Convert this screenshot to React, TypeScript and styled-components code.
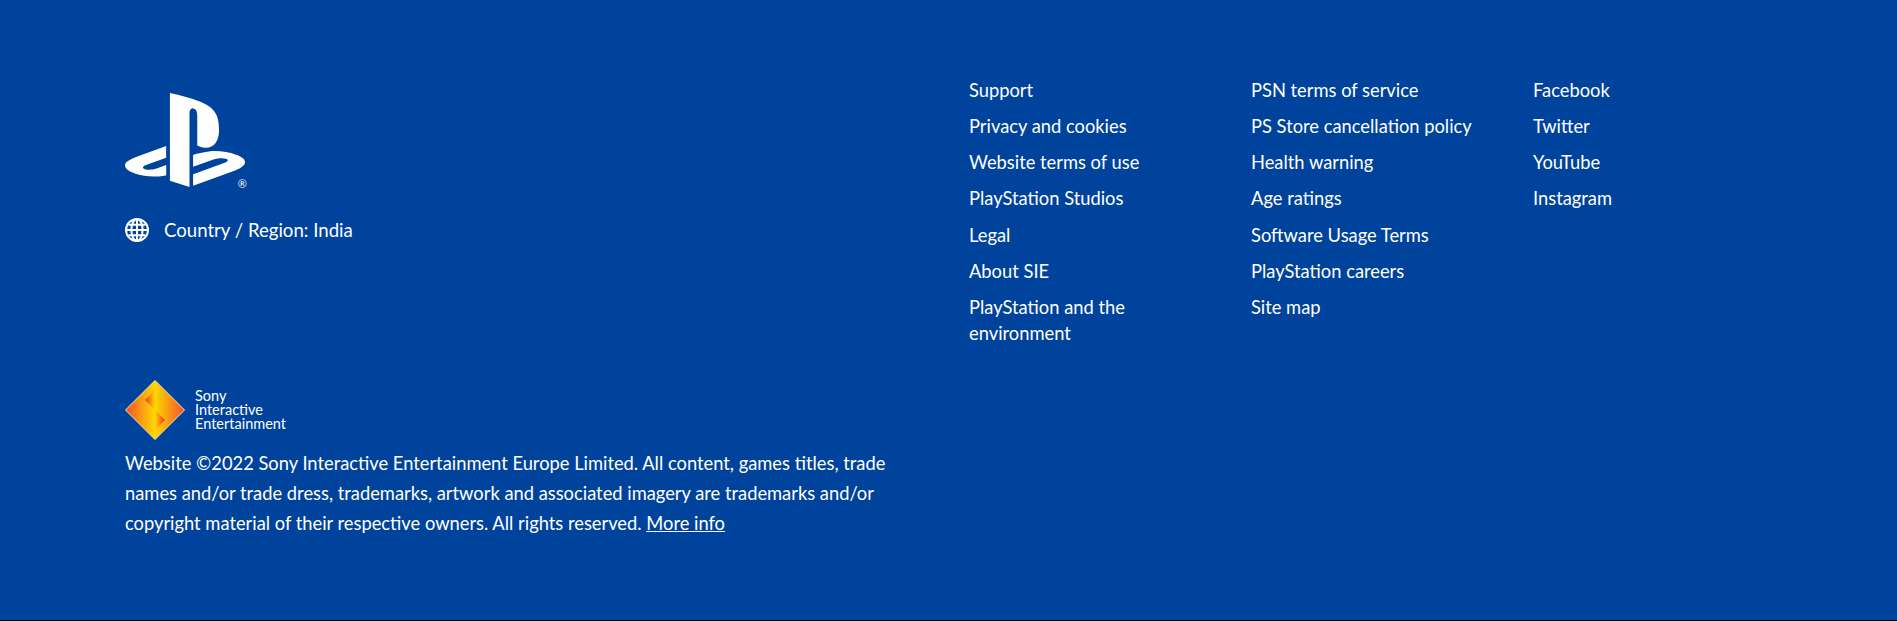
import styled, { createGlobalStyle } from "styled-components";

const GlobalStyle = createGlobalStyle`
  html, body {
    margin: 0;
    padding: 0;
    background: #000;
  }
`;

const Footer = styled.footer`
  box-sizing: border-box;
  height: 620px;
  background: #00439c;
  color: #fff;
  font-family: Lato, "Liberation Sans", sans-serif;
  font-size: 18.32px;
  display: flex;
  padding: 77px 125px 0;
`;

const Left = styled.div`
  width: 844px;
  flex: none;
  display: flex;
  flex-direction: column;
`;

const LogoWrap = styled.div`
  position: relative;
  width: 120px;
  height: 94px;
  margin-top: 16px;
`;

const Registered = styled.span`
  position: absolute;
  right: -2px;
  bottom: -2px;
  font-size: 11px;
  line-height: 10px;
`;

const Region = styled.div`
  display: flex;
  align-items: center;
  gap: 15px;
  margin-top: 30px;
  line-height: 26px;
  font-size: 18.6px;
`;

const SieRow = styled.div`
  display: flex;
  align-items: center;
  gap: 10px;
  margin-top: 136.5px;
`;

const SieName = styled.div`
  font-size: 14.5px;
  line-height: 14px;
`;

const Legal = styled.p`
  margin: 8px 0 0;
  width: 800px;
  line-height: 30.2px;
`;

const MoreInfo = styled.a`
  color: #fff;
  text-decoration: underline;
`;

const Columns = styled.nav`
  display: grid;
  grid-template-columns: repeat(3, 282px);
  align-items: start;
`;

const LinkList = styled.ul`
  list-style: none;
  margin: 0;
  padding: 0;
`;

const LinkItem = styled.li`
  width: 200px;
  line-height: 26px;
  margin-bottom: 10.15px;
`;

const Wide = styled(LinkItem)`
  width: 260px;
`;

const PsLogo = () => (
  <svg width="120" height="94" viewBox="0 2.6 24 18.8" fill="#fff">
    <path d="M8.984 2.596v17.547l3.915 1.261V6.688c0-.69.304-1.151.794-.991.636.18.76.814.76 1.505v5.875c2.441 1.193 4.362-.002 4.362-3.152 0-3.237-1.126-4.675-4.438-5.827-1.307-.448-3.728-1.186-5.39-1.502zm4.656 16.241l6.296-2.275c.715-.258.826-.625.246-.818-.586-.192-1.637-.139-2.357.123l-4.205 1.5V14.98l.24-.085s1.201-.42 2.913-.615c1.696-.18 3.785.03 5.437.661 1.848.601 2.04 1.472 1.576 2.072-.465.6-1.622 1.036-1.622 1.036l-8.544 3.107V18.86zM1.807 18.6c-1.9-.545-2.214-1.668-1.352-2.32.801-.586 2.16-1.052 2.16-1.052l5.615-2.013v2.313L4.205 17c-.705.271-.825.632-.239.826.586.195 1.637.15 2.343-.12L8.247 17v2.074c-.12.03-.256.044-.39.073-1.939.331-3.996.196-6.038-.479z" />
  </svg>
);

const Globe = () => (
  <svg width="24" height="24" viewBox="0 0 24 24">
    <g fill="none" stroke="#fff" strokeWidth="2">
      <circle cx="12" cy="12" r="11" />
      <ellipse cx="12" cy="12" rx="5.6" ry="11" />
      <path d="M12 1v22M3.5 6.8h17M1 12h22M3.5 17.2h17" />
    </g>
  </svg>
);

const SieLogo = () => (
  <svg width="60" height="60" viewBox="0 0 60 60">
    <defs>
      <linearGradient id="sieBase" x1="0" y1="0" x2="1" y2="0">
        <stop offset="0" stopColor="#f4502a" />
        <stop offset="0.5" stopColor="#ffd800" />
        <stop offset="1" stopColor="#f4502a" />
      </linearGradient>
      <linearGradient id="sieLeft" x1="0" y1="0" x2="1" y2="0">
        <stop offset="0" stopColor="#ee2f2a" />
        <stop offset="1" stopColor="#ffd800" />
      </linearGradient>
      <linearGradient id="sieRight" x1="0" y1="0" x2="1" y2="0">
        <stop offset="0" stopColor="#ffd800" />
        <stop offset="1" stopColor="#ee2f2a" />
      </linearGradient>
    </defs>
    <polygon points="30,0.5 59.5,30 30,59.5 0.5,30" fill="url(#sieBase)" stroke="#ffe9a0" strokeWidth="1" />
    <polygon points="20,20 30,10 30,30" fill="url(#sieLeft)" />
    <polygon points="40,40 30,30 30,50" fill="url(#sieRight)" />
  </svg>
);

const col1 = ["Support", "Privacy and cookies", "Website terms of use", "PlayStation Studios", "Legal", "About SIE", "PlayStation and the environment"];
const col2 = ["PSN terms of service", "PS Store cancellation policy", "Health warning", "Age ratings", "Software Usage Terms", "PlayStation careers", "Site map"];
const col3 = ["Facebook", "Twitter", "YouTube", "Instagram"];

export default function App() {
  return (
    <>
      <GlobalStyle />
      <Footer>
        <Left>
          <LogoWrap>
            <PsLogo />
            <Registered>®</Registered>
          </LogoWrap>
          <Region>
            <Globe />
            <span>Country / Region: India</span>
          </Region>
          <SieRow>
            <SieLogo />
            <SieName>
              Sony
              <br />
              Interactive
              <br />
              Entertainment
            </SieName>
          </SieRow>
          <Legal>
            Website ©2022 Sony Interactive Entertainment Europe Limited. All content, games titles, trade names and/or trade dress, trademarks, artwork and associated imagery are trademarks and/or copyright material of their respective owners. All rights reserved. <MoreInfo href="#">More info</MoreInfo>
          </Legal>
        </Left>
        <Columns>
          <LinkList>
            {col1.map((t) => (
              <LinkItem key={t}>{t}</LinkItem>
            ))}
          </LinkList>
          <LinkList>
            {col2.map((t) => (
              <Wide key={t}>{t}</Wide>
            ))}
          </LinkList>
          <LinkList>
            {col3.map((t) => (
              <LinkItem key={t}>{t}</LinkItem>
            ))}
          </LinkList>
        </Columns>
      </Footer>
    </>
  );
}
